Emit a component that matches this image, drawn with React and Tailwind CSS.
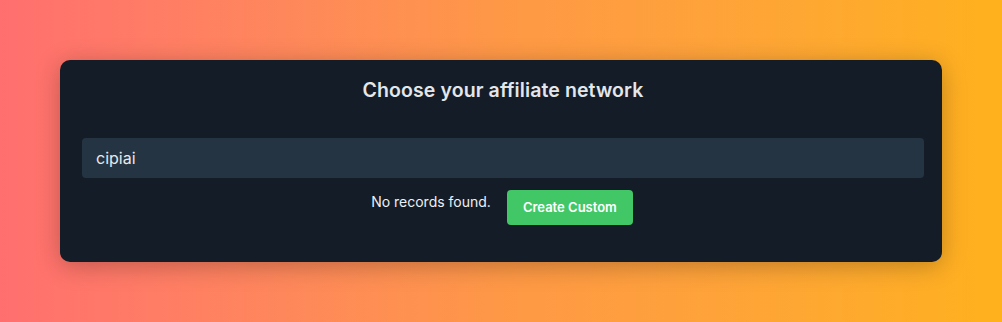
import React from "react";

const App = () => {
  return (
    <div
      className="min-h-[322px] w-full bg-gradient-to-r from-[#ff6f6f] via-[#fe9846] to-[#feb11c] p-[60px]"
      style={{ fontFamily: "Inter, 'Noto Sans', sans-serif" }}
    >
      <div className="h-[202px] rounded-[10px] bg-[#141d27] pl-[22px] pr-[18px] pt-[16px] shadow-[0_4px_24px_rgba(0,0,0,0.25)]">
        {/* Title */}
        <h1 className="text-center text-[19.5px] font-semibold leading-[28px] tracking-[0.1px] text-[#e3e6ea]">
          Choose your affiliate network
        </h1>

        {/* Search input */}
        <div className="mt-[34px] flex h-[40px] items-center rounded-[4px] bg-[#253443] px-[14px]">
          <input
            className="w-full bg-transparent text-[16px] text-[#e5e9ee] outline-none"
            defaultValue="cipiai"
          />
        </div>

        {/* Empty state */}
        <div className="mt-[12px] flex items-start justify-center gap-[16px] pr-[2px]">
          <span className="pt-[2px] text-[14px] leading-[20px] text-[#eef0f3]">
            No records found.
          </span>
          <button className="h-[35px] w-[126px] rounded-[4px] bg-[#42c767] text-[13px] font-semibold text-white">
            Create Custom
          </button>
        </div>
      </div>
    </div>
  );
};

export default App;
